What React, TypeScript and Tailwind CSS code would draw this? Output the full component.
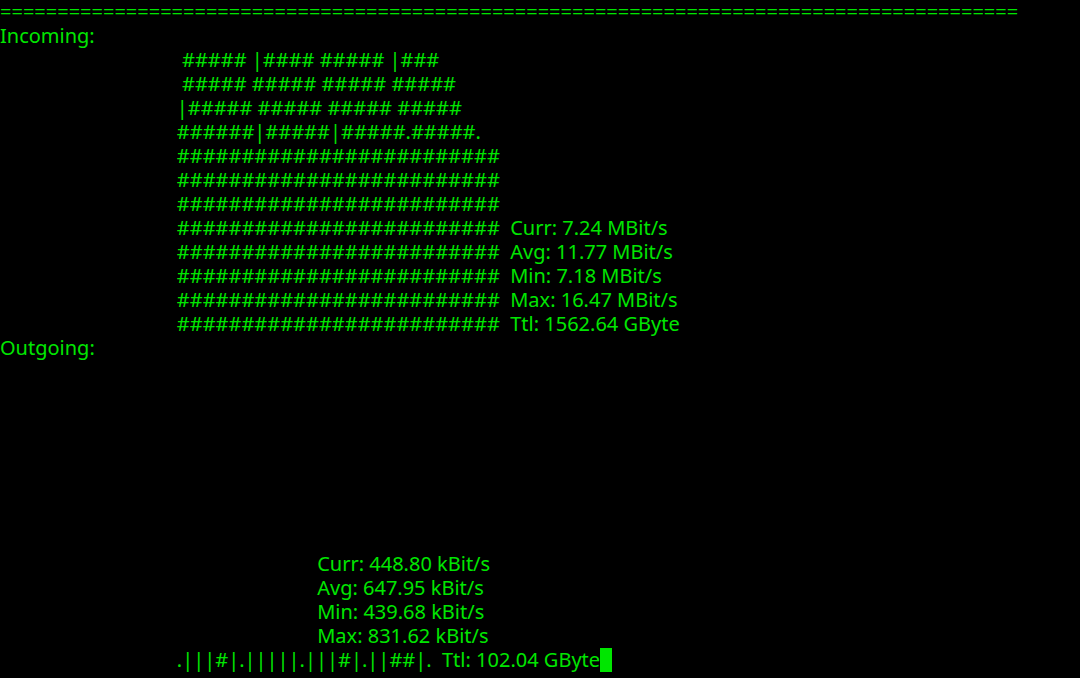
const pad = (n: number) => ' '.repeat(n);
const H = '#'.repeat(25);

const lines: string[] = [
  '='.repeat(89),
  'Incoming:',
  pad(35) + '##### |#### ##### |###',
  pad(35) + '##### ##### ##### #####',
  pad(34) + '|##### ##### ##### #####',
  pad(34) + '######|#####|#####.#####.',
  pad(34) + H,
  pad(34) + H,
  pad(34) + H,
  pad(34) + H + '  Curr: 7.24 MBit/s',
  pad(34) + H + '  Avg: 11.77 MBit/s',
  pad(34) + H + '  Min: 7.18 MBit/s',
  pad(34) + H + '  Max: 16.47 MBit/s',
  pad(34) + H + '  Ttl: 1562.64 GByte',
  'Outgoing:',
  '', '', '', '', '', '', '', '',
  pad(61) + 'Curr: 448.80 kBit/s',
  pad(61) + 'Avg: 647.95 kBit/s',
  pad(61) + 'Min: 439.68 kBit/s',
  pad(61) + 'Max: 831.62 kBit/s',
];

export default function App() {
  return (
    <div className="w-[1080px] h-[678px] overflow-hidden bg-black text-[#00e600] font-['DejaVu_Sans_Mono'] text-[20px] leading-[24px] whitespace-pre">
      {lines.map((l, i) => (
        <div key={i} className="h-[24px]">{l}</div>
      ))}
      <div className="h-[24px] flex">
        <span>{pad(34) + '.|||#|.|||||.|||#|.||##|.  Ttl: 102.04 GByte'}</span>
        <span className="inline-block w-[12px] h-[24px] bg-[#00e600]" />
      </div>
    </div>
  );
}
